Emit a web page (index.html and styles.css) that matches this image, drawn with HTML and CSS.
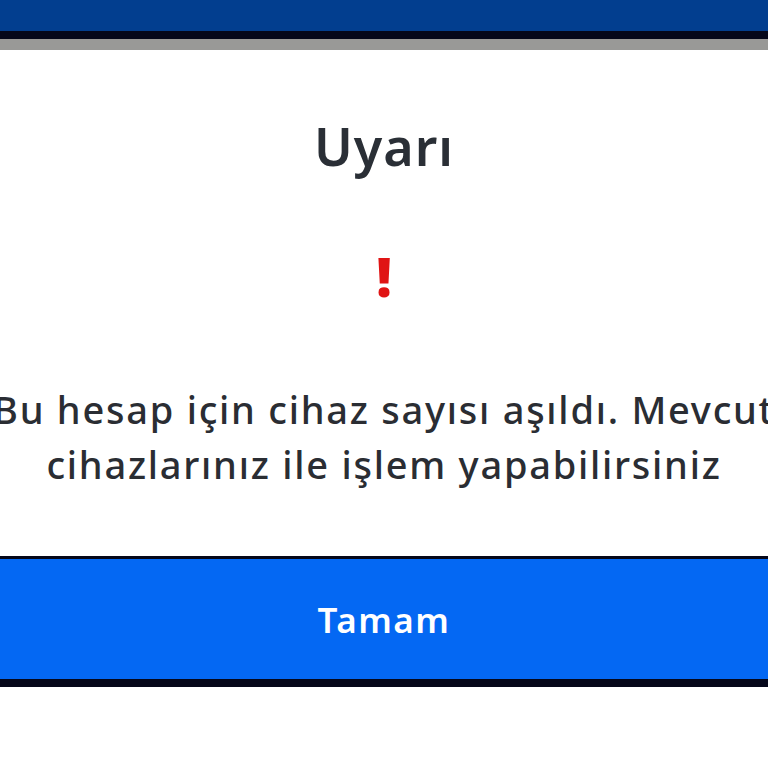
FILE: index.html
```html
<!DOCTYPE html>
<html lang="tr">
<head>
<meta charset="utf-8">
<link rel="stylesheet" href="styles.css">
</head>
<body>
<div class="topbar"></div>
<div class="shade"></div>
<main class="dialog">
  <h1 class="title">Uyarı</h1>
  <div class="mark">!</div>
  <p class="message">Bu hesap için cihaz sayısı aşıldı. Mevcut cihazlarınız ile işlem yapabilirsiniz</p>
</main>
<button class="ok">Tamam</button>
</body>
</html>
```

FILE: styles.css
```css
html, body {
  margin: 0;
  padding: 0;
  background: #ffffff;
  overflow: hidden;
  width: 768px;
  height: 768px;
}
body {
  font-family: "Noto Sans", "Open Sans", sans-serif;
  color: #2a2d33;
}
.topbar {
  height: 31px;
  background: #023e8f;
  border-bottom: 8px solid #05071a;
}
.shade {
  height: 11px;
  background: #999997;
}
.dialog {
  display: flex;
  flex-direction: column;
  align-items: center;
  height: 506px;
}
.title {
  margin: 60px 0 0;
  font-size: 52px;
  font-weight: 600;
  letter-spacing: 1px;
  line-height: 72px;
  color: #2a2f36;
}
.mark {
  margin-top: 64px;
  font-size: 54px;
  font-weight: 900;
  line-height: 60px;
  color: #e01414;
}
.message {
  margin: 76px 0 0;
  width: 840px;
  flex-shrink: 0;
  text-align: center;
  font-size: 38px;
  letter-spacing: 1.75px;
  line-height: 55px;
  font-weight: 500;
  color: #2a2d33;
}
.ok {
  display: block;
  width: 100%;
  height: 131px;
  margin: 0;
  padding: 0;
  border: none;
  border-top: 3px solid #05071a;
  border-bottom: 8px solid #05071a;
  background: #0468f3;
  color: #ffffff;
  font-family: "Noto Sans", sans-serif;
  font-size: 35px;
  letter-spacing: 1.5px;
  font-weight: 600;
}
```
